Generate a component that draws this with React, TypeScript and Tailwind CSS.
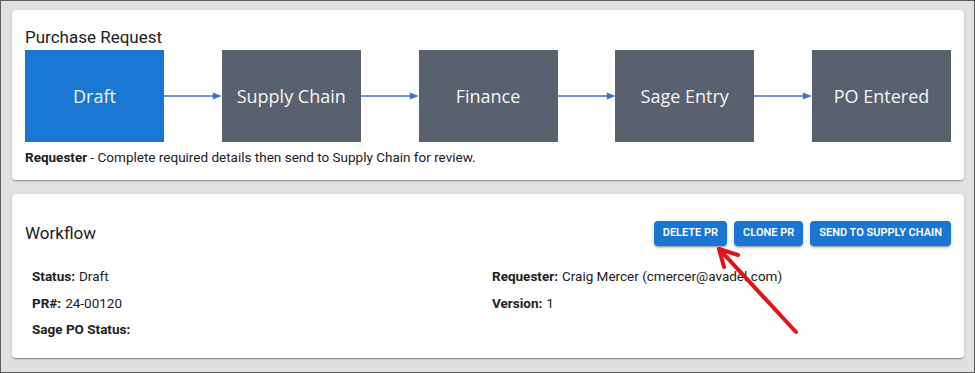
import React from 'react'

const steps = ['Draft', 'Supply Chain', 'Finance', 'Sage Entry', 'PO Entered']

const FlowArrow = () => (
  <div className="flex-1 h-[10px] flex items-center">
    <svg width="100%" height="10" viewBox="0 0 58 10" preserveAspectRatio="none" className="block">
      <line x1="0" y1="5" x2="50" y2="5" stroke="#4472c4" strokeWidth="1.5" />
      <polygon points="49,1.5 58,5 49,8.5" fill="#4472c4" />
    </svg>
  </div>
)

const Field = ({ label, value }: { label: string; value?: string }) => (
  <div className="h-[26.5px] flex items-center text-[13.5px] text-[#212121]">
    <span className="font-bold">{label}</span>
    {value && <span className="ml-1">{value}</span>}
  </div>
)

const Card = ({ children, className = '' }: { children: React.ReactNode; className?: string }) => (
  <div className={`bg-white rounded-[4px] shadow-[0_2px_1px_-1px_rgba(0,0,0,0.2),0_1px_1px_0_rgba(0,0,0,0.14),0_1px_3px_0_rgba(0,0,0,0.12)] ${className}`}>
    {children}
  </div>
)

export default function App() {
  return (
    <div
      className="relative w-[975px] h-[373px] border border-[#5c5c5c] bg-[#e0e0e0] pl-[11px] pr-[10px] pt-[9px] overflow-hidden"
      style={{ fontFamily: 'Roboto, "Liberation Sans", sans-serif' }}
    >
      {/* Purchase request flow */}
      <Card className="h-[170px] px-[13px] pt-[14px]">
        <div className="text-[17px] leading-[26px] text-[#212121]">Purchase Request</div>
        <div className="flex items-center">
          {steps.map((step, i) => (
            <React.Fragment key={step}>
              {i > 0 && <FlowArrow />}
              <div
                className={`w-[139px] h-[92px] flex items-center justify-center text-[18px] font-medium text-[#f4f4f4] ${
                  i === 0 ? 'bg-[#1976d2]' : 'bg-[#5a616e]'
                }`}
                style={{ fontFamily: '"Open Sans", "Noto Sans", sans-serif' }}
              >
                {step}
              </div>
            </React.Fragment>
          ))}
        </div>
        <div className="mt-[5px] text-[13.5px] leading-[20px] text-[#212121]">
          <span className="font-bold">Requester</span> - Complete required details then send to Supply Chain for review.
        </div>
      </Card>

      {/* Workflow */}
      <Card className="mt-[14px] h-[164px] pt-[27px]">
        <div className="flex items-center justify-between h-[25px] pl-[13px] pr-[13px]">
          <div className="text-[17px] text-[#212121]">Workflow</div>
          <div className="flex gap-[7px]">
            {['Delete PR', 'Clone PR', 'Send to Supply Chain'].map(label => (
              <button
                key={label}
                className="h-[25px] px-[9px] rounded-[4px] bg-[#1976d2] text-white text-[11px] font-semibold uppercase shadow-[0_3px_1px_-2px_rgba(0,0,0,0.2),0_2px_2px_0_rgba(0,0,0,0.14),0_1px_5px_0_rgba(0,0,0,0.12)]"
              >
                {label}
              </button>
            ))}
          </div>
        </div>
        <div className="mt-[17px] px-[20px] grid grid-cols-[460px_1fr]">
          <div>
            <Field label="Status:" value="Draft" />
            <Field label="PR#:" value="24-00120" />
            <Field label="Sage PO Status:" />
          </div>
          <div>
            <Field label="Requester:" value="Craig Mercer (cmercer@avadel.com)" />
            <Field label="Version:" value="1" />
          </div>
        </div>
      </Card>

      {/* Annotation arrow */}
      <svg className="absolute left-0 top-0 pointer-events-none" width="975" height="373">
        <g stroke="#e4131b" strokeWidth="4" strokeLinecap="round" fill="none">
          <line x1="795" y1="331" x2="720" y2="250" />
          <line x1="718" y1="248" x2="737" y2="254" />
          <line x1="718" y1="248" x2="723" y2="266" />
        </g>
      </svg>
    </div>
  )
}
